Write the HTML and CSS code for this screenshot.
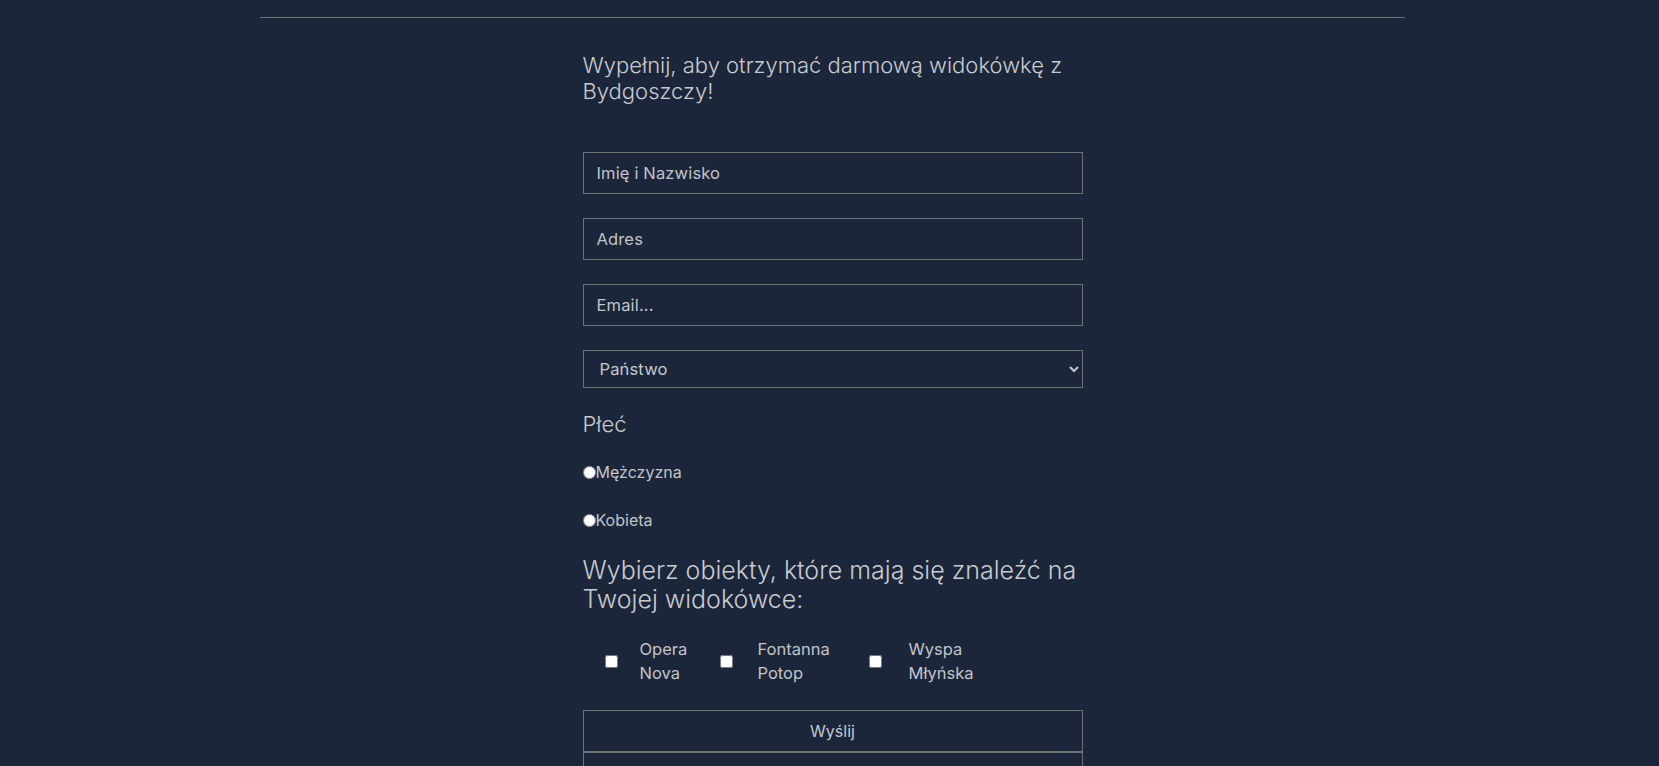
FILE: index.html
```html
<!DOCTYPE html>
<html lang="pl">
<head>
<meta charset="utf-8">
<title>Widokówka z Bydgoszczy</title>
<link rel="stylesheet" href="styles.css">
</head>
<body>
<div class="page">
  <hr class="rule">
  <form class="card-form">
    <h2 class="title">Wypełnij, aby otrzymać darmową widokówkę z Bydgoszczy!</h2>
    <input class="field" type="text" placeholder="Imię i Nazwisko">
    <input class="field" type="text" placeholder="Adres">
    <input class="field" type="email" placeholder="Email...">
    <select class="field select">
      <option>Państwo</option>
      <option>Polska</option>
      <option>Niemcy</option>
    </select>
    <h3 class="section">Płeć</h3>
    <label class="radio"><input type="radio" name="plec">Mężczyzna</label>
    <label class="radio"><input type="radio" name="plec">Kobieta</label>
    <h3 class="section big">Wybierz obiekty, które mają się znaleźć na Twojej widokówce:</h3>
    <div class="options">
      <div class="opt o1"><input type="checkbox" id="c1"><label for="c1">Opera Nova</label></div>
      <div class="opt o2"><input type="checkbox" id="c2"><label for="c2">Fontanna Potop</label></div>
      <div class="opt o3"><input type="checkbox" id="c3"><label for="c3">Wyspa Młyńska</label></div>
    </div>
    <div class="buttons">
      <button class="btn" type="submit">Wyślij</button>
      <button class="btn" type="reset" aria-label="Wyczyść"></button>
    </div>
  </form>
</div>
</body>
</html>
```
FILE: styles.css
```css
html, body {
  margin: 0;
  padding: 0;
  background: #1b263b;
}
body {
  font-family: "Inter", "Open Sans", sans-serif;
  color: #c6c8cc;
  overflow: hidden;
}
.page {
  width: 1145px;
  margin-left: 260px;
  padding-top: 17px;
}
.rule {
  margin: 0;
  border: 0;
  border-top: 1px solid #6a6d72;
  height: 0;
}
.card-form {
  width: 500px;
  margin: 35px auto 0;
  display: flex;
  flex-direction: column;
  gap: 24px;
}
.title {
  margin: 0 0 24px;
  font-size: 22px;
  line-height: 25.5px;
  font-weight: 300;
  color: #c9cbcf;
}
.field {
  box-sizing: border-box;
  width: 500px;
  height: 42px;
  margin: 0;
  padding: 0 13px;
  background: transparent;
  border: 1px solid #6f6f6f;
  border-radius: 0;
  color: #c6c8cc;
  font-family: inherit;
  font-size: 16.5px;
  letter-spacing: 0.15px;
  outline: none;
}
.field::placeholder {
  color: #c2c4c8;
  opacity: 1;
}
.select {
  height: 38px;
  padding: 0 12px;
  color: #c6c8cc;
}
.select option {
  background: #1b263b;
}
.section {
  margin: 0;
  font-size: 22px;
  line-height: 24px;
  font-weight: 300;
  color: #c9cbcf;
}
.section.big {
  font-size: 25px;
  line-height: 28.5px;
}
.radio {
  display: flex;
  align-items: center;
  height: 24px;
  font-size: 16px;
  color: #c2c4c8;
}
.radio input {
  margin: 0;
  width: 13px;
  height: 13px;
}
.options {
  display: flex;
  align-items: center;
}
.opt {
  display: flex;
  align-items: center;
}
.opt input {
  margin: 0 22px;
  width: 13px;
  height: 13px;
  flex: none;
}
.opt label {
  font-size: 16.5px;
  line-height: 24px;
  color: #c2c4c8;
}
.o1 label { width: 58px; }
.o2 input { margin-right: 25px; }
.o2 label { width: 89px; }
.o3 input { margin-right: 27px; }
.o3 label { width: 90px; }
.buttons {
  margin-top: 1px;
  display: flex;
  flex-direction: column;
}
.btn {
  box-sizing: border-box;
  width: 500px;
  height: 42px;
  margin: 0;
  background: transparent;
  border: 1px solid #6f6f6f;
  color: #c6c8cc;
  font-family: inherit;
  font-size: 16px;
}
```
